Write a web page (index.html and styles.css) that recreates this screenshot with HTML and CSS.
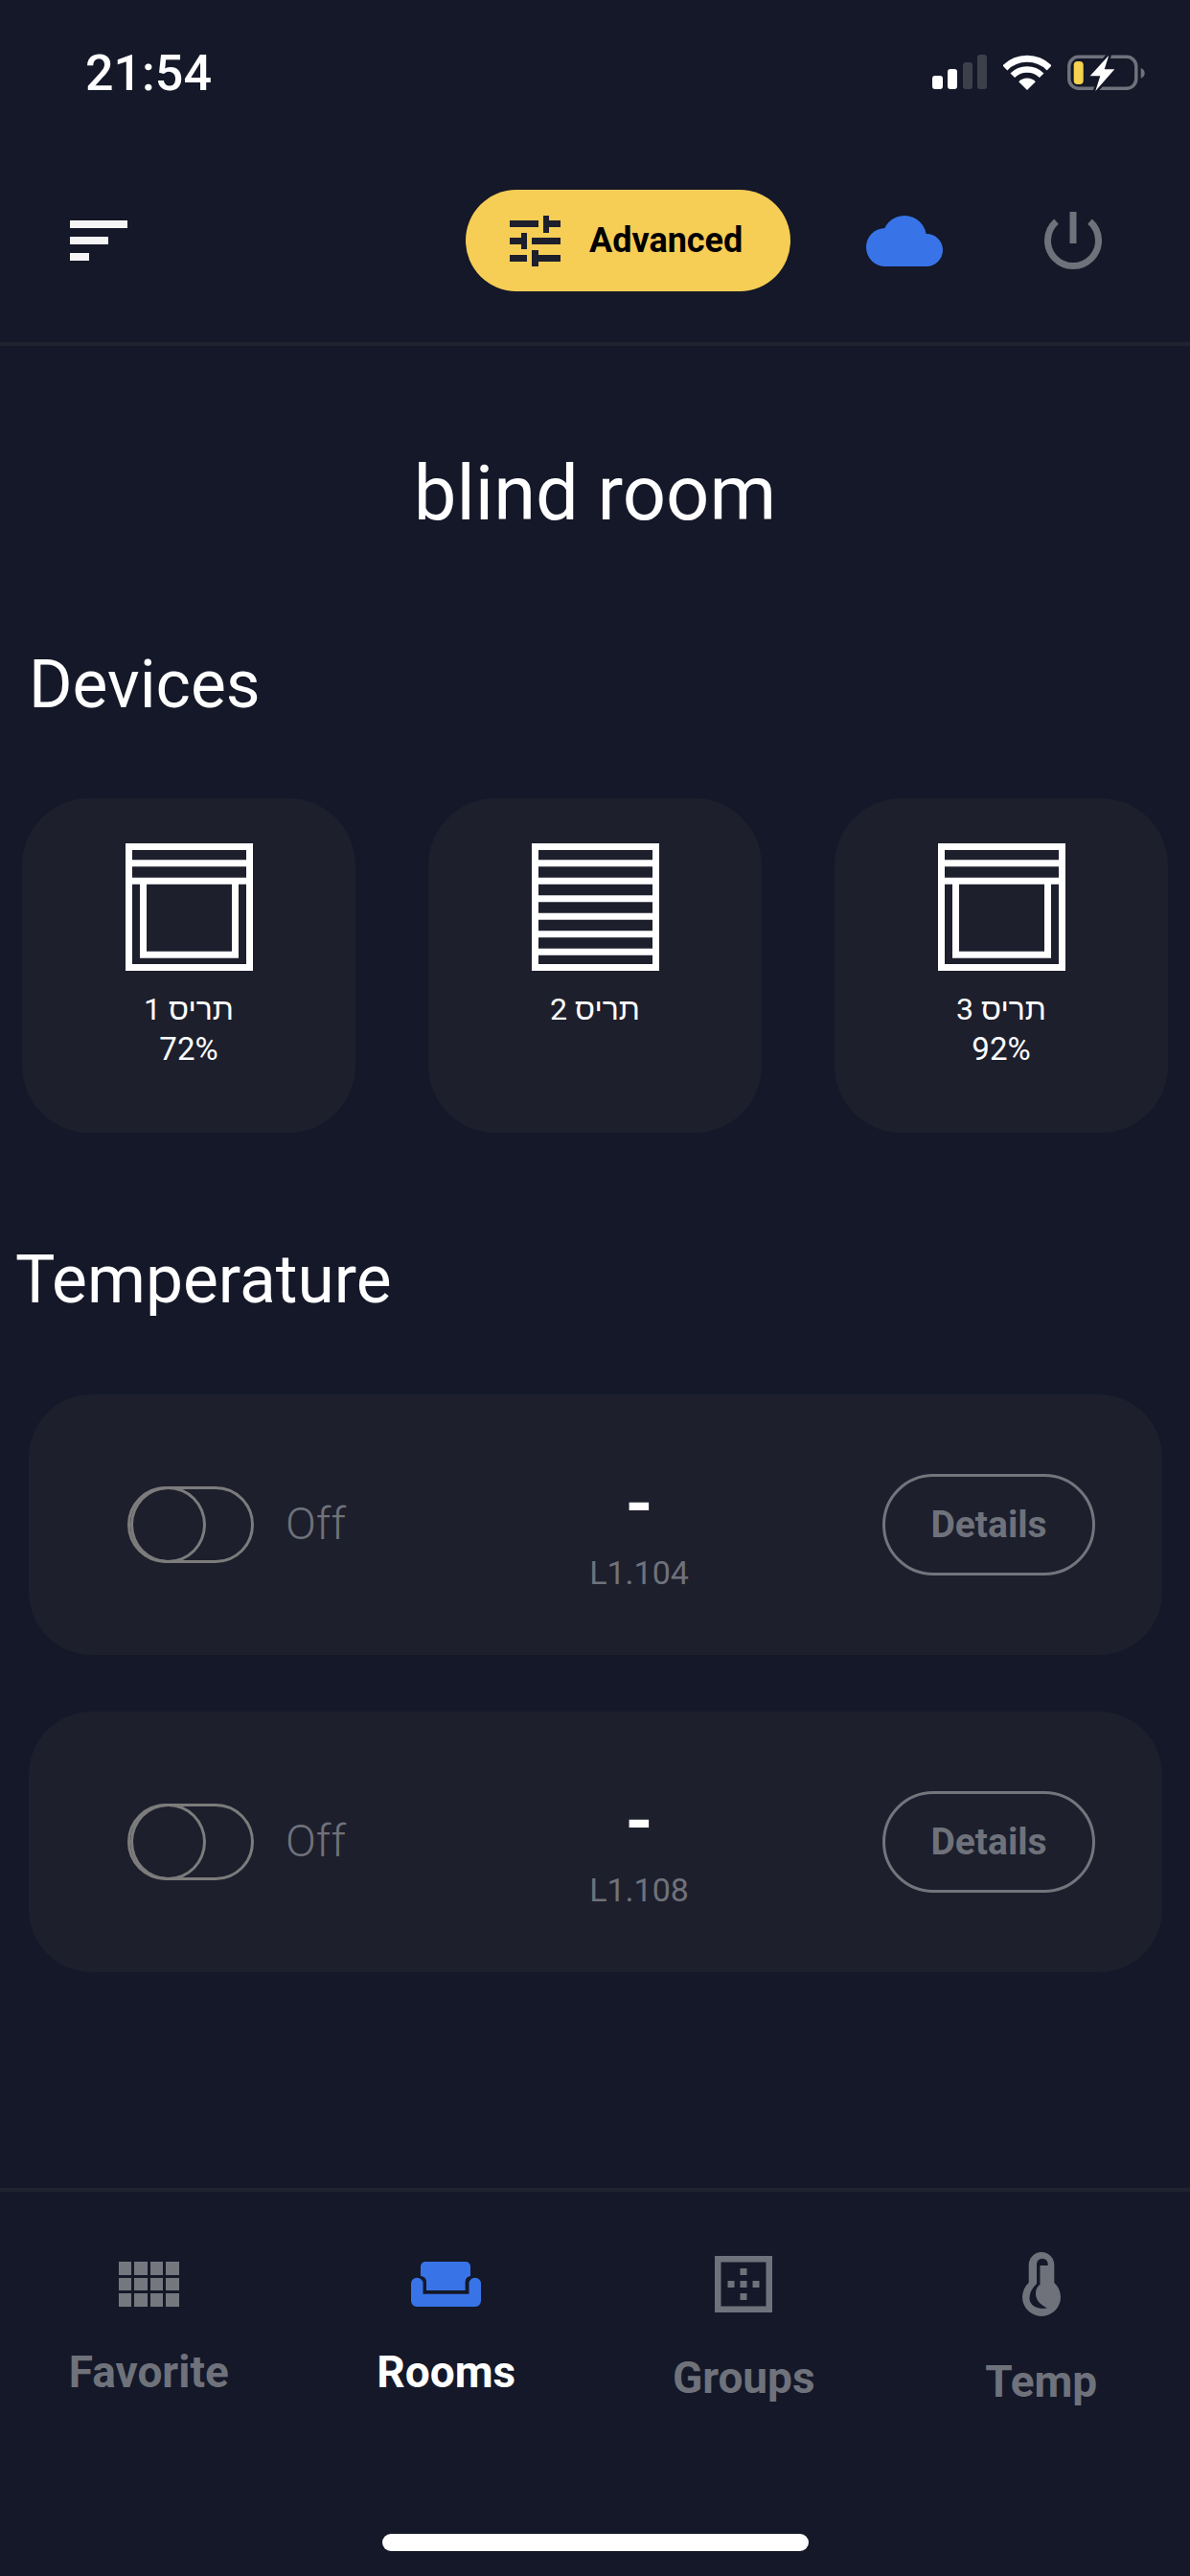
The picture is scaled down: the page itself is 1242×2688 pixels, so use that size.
FILE: index.html
```html
<!DOCTYPE html>
<html lang="en">
<head>
  <meta charset="UTF-8" />
  <meta name="viewport" content="width=device-width, initial-scale=1.0"/>
  <title>blind room</title>
  <link rel="stylesheet" href="styles.css">
</head>
<body>
  <div class="app">
    <div class="status">
      <div class="time">21:54</div>
      <div class="status-icons">
        <svg width="57" height="36" viewBox="0 0 57 36">
          <rect x="0" y="22" width="11" height="14" rx="3" fill="#fff"/>
          <rect x="16" y="15" width="10" height="21" rx="3" fill="#fff"/>
          <rect x="32" y="8" width="10" height="28" rx="3" fill="#3d404b"/>
          <rect x="47" y="0" width="10" height="36" rx="3" fill="#3d404b"/>
        </svg>
        <svg width="50" height="37" viewBox="0 0 50 37">
          <path d="M25 37L16.2 28.2A12.5 12.5 0 0 1 33.8 28.2Z" fill="#fff"/>
          <path d="M9.8 21.8A21.5 21.5 0 0 1 40.2 21.8" fill="none" stroke="#fff" stroke-width="6.5"/>
          <path d="M1.9 13.9A32.7 32.7 0 0 1 48.1 13.9" fill="none" stroke="#fff" stroke-width="7"/>
        </svg>
        <svg width="81" height="39" viewBox="0 0 81 39">
          <rect x="1.8" y="2.3" width="70" height="33" rx="10" fill="none" stroke="#6f727b" stroke-width="3.5"/>
          <path d="M76.7 14C79.5 15 80.7 17 80.7 19.3C80.7 21.7 79.5 23.7 76.7 24.7Z" fill="#6f727b"/>
          <rect x="6.7" y="7" width="10" height="24" rx="4" fill="#f6d34e"/>
          <path d="M43.3 0.7L23.7 22.3H34.3L29.3 38L49.3 15.3H38.7Z" fill="#fff" stroke="#141828" stroke-width="5" paint-order="stroke" stroke-linejoin="round"/>
        </svg>
      </div>
    </div>

    <header class="topbar">
      <div class="menu-icon"><span></span><span></span><span></span></div>
      <button class="advanced">
        <svg width="53" height="53" viewBox="0 0 53 53" fill="#1d1f2d">
          <rect x="0" y="5" width="30" height="7"/>
          <rect x="35" y="0" width="6" height="18"/>
          <rect x="41" y="5" width="12" height="7"/>
          <rect x="0" y="23" width="12" height="7"/>
          <rect x="12" y="18" width="6" height="17"/>
          <rect x="23" y="23" width="30" height="7"/>
          <rect x="0" y="41" width="18" height="7"/>
          <rect x="23" y="36" width="7" height="17"/>
          <rect x="30" y="41" width="23" height="7"/>
        </svg>
        <span>Advanced</span>
      </button>
      <svg class="cloud" width="80" height="53" viewBox="0 0 80 53" fill="#3874e8">
        <circle cx="40" cy="23" r="23"/>
        <circle cx="20" cy="33" r="20"/>
        <circle cx="63" cy="36" r="17"/>
        <rect x="20" y="30" width="43" height="23"/>
      </svg>
      <svg class="power" width="60" height="60" viewBox="0 0 60 60" fill="none" stroke="#6f727b" stroke-width="7">
        <path d="M12.5 10.1A26.5 26.5 0 1 0 47.5 10.1"/>
        <path d="M30 0V33"/>
      </svg>
    </header>

    <h1 class="room-title">blind room</h1>

    <h2 class="section-title devices-title">Devices</h2>
    <div class="devices">
      <div class="device">
        <svg width="133" height="133" viewBox="0 0 133 133" fill="none" stroke="#fff" stroke-width="7">
          <rect x="3.5" y="3.5" width="126" height="126"/>
          <path d="M3.5 20.8H129.5M3.5 39.2H129.5"/>
          <path d="M18.5 39.2V116.2H114.5V39.2"/>
        </svg>
        <div class="device-name" dir="rtl">תריס 1</div>
        <div class="device-value">72%</div>
      </div>
      <div class="device">
        <svg width="133" height="133" viewBox="0 0 133 133" fill="none" stroke="#fff" stroke-width="7">
          <rect x="3.5" y="3.5" width="126" height="126"/>
          <path d="M3.5 20.8H129.5M3.5 39.2H129.5M3.5 57.8H129.5M3.5 76.2H129.5M3.5 94.8H129.5M3.5 113.2H129.5"/>
        </svg>
        <div class="device-name" dir="rtl">תריס 2</div>
      </div>
      <div class="device">
        <svg width="133" height="133" viewBox="0 0 133 133" fill="none" stroke="#fff" stroke-width="7">
          <rect x="3.5" y="3.5" width="126" height="126"/>
          <path d="M3.5 20.8H129.5M3.5 39.2H129.5"/>
          <path d="M18.5 39.2V116.2H114.5V39.2"/>
        </svg>
        <div class="device-name" dir="rtl">תריס 3</div>
        <div class="device-value">92%</div>
      </div>
    </div>

    <h2 class="section-title temp-title">Temperature</h2>
    <div class="temps">
      <div class="temp-card">
        <div class="temp-switch">
          <div class="toggle"><div class="knob"></div></div>
          <span class="toggle-label">Off</span>
        </div>
        <div class="temp-info">
          <div class="temp-value">-</div>
          <div class="temp-name">L1.104</div>
        </div>
        <button class="details">Details</button>
      </div>
      <div class="temp-card">
        <div class="temp-switch">
          <div class="toggle"><div class="knob"></div></div>
          <span class="toggle-label">Off</span>
        </div>
        <div class="temp-info">
          <div class="temp-value">-</div>
          <div class="temp-name">L1.108</div>
        </div>
        <button class="details">Details</button>
      </div>
    </div>

    <nav class="tabbar">
      <div class="tab">
        <div class="grid-icon">
          <i></i><i></i><i></i><i></i>
          <i></i><i></i><i></i><i></i>
          <i></i><i></i><i></i><i></i>
        </div>
        <span>Favorite</span>
      </div>
      <div class="tab active">
        <svg width="73" height="47" viewBox="0 0 73 47" fill="#3874e8">
          <path d="M15 0H57A5 5 0 0 1 62 5V15C58.500 15.500 56.600 18 56.600 21V30H16V21C16 18 14 15.500 10 15V5A5 5 0 0 1 15 0Z"/>
          <path d="M6.200 16.700A6.200 6.200 0 0 1 12.500 23V33.700H60.500V23A6.200 6.200 0 0 1 73 23V41A6 6 0 0 1 67 47H6A6 6 0 0 1 0 41V23A6.200 6.200 0 0 1 6.200 16.700Z"/>
        </svg>
        <span>Rooms</span>
      </div>
      <div class="tab">
        <svg width="60" height="59" viewBox="0 0 60 59" fill="#6f727b">
          <path fill-rule="evenodd" d="M0 0H60V59H0ZM6.500 6.500V52.500H53.500V6.500Z"/>
          <rect x="26.500" y="13" width="7" height="7"/>
          <rect x="13.500" y="26" width="7" height="7"/>
          <rect x="26.500" y="26" width="7" height="7"/>
          <rect x="39.500" y="26" width="7" height="7"/>
          <rect x="26.500" y="39" width="7" height="7"/>
        </svg>
        <span>Groups</span>
      </div>
      <div class="tab">
        <svg width="40" height="67" viewBox="0 0 40 67">
          <path d="M6.700 13.300a13.300 13.300 0 0 1 26.600 0V32a20 20 0 1 1-26.600 0Z" fill="#6f727b"/>
          <path d="M15 12.500a5.850 5.850 0 0 1 11.700 0V14H18.500V34C12 38 11 52 26 58.300C14 61 6 54 7.700 46C8.500 40 12 36 15 33Z" fill="#141828"/>
        </svg>
        <span>Temp</span>
      </div>
    </nav>
    <div class="home-bar"></div>
  </div>
</body>
</html>
```

FILE: styles.css
```css
:root {
  --bg: #141828;
  --surface: #1d1f2d;
  --line: #20222f;
  --muted: #6f727b;
  --blue: #3874e8;
  --yellow: #f6cd55;
}

* {
  margin: 0;
  padding: 0;
  box-sizing: border-box;
}

body {
  background: var(--bg);
  color: #fff;
  font-family: Roboto, "Noto Sans", sans-serif;
}

.app {
  display: flex;
  flex-direction: column;
  width: 1242px;
  height: 2688px;
  overflow: hidden;
}

/* status bar */
.status {
  display: flex;
  justify-content: space-between;
  height: 145px;
  padding: 57px 47px 0 89px;
}

.time {
  font-size: 52px;
  font-weight: 500;
  line-height: 40px;
}

.status-icons {
  display: flex;
  align-items: flex-start;
  gap: 17px;
}

/* top bar */
.topbar {
  display: flex;
  align-items: center;
  height: 216px;
  padding-left: 73px;
  border-bottom: 4px solid var(--line);
}

.menu-icon {
  display: flex;
  flex-direction: column;
  gap: 9px;
  width: 60px;
}

.menu-icon span {
  display: block;
  height: 8px;
  background: #f5f5f5;
}

.menu-icon span:nth-child(2) { width: 40px; }
.menu-icon span:nth-child(3) { width: 20px; }

.advanced {
  display: flex;
  align-items: center;
  gap: 30px;
  width: 339px;
  height: 106px;
  margin-left: 353px;
  padding-left: 46px;
  background: var(--yellow);
  border: none;
  border-radius: 53px;
  color: #000;
  font-family: inherit;
  font-size: 36px;
  font-weight: 700;
}

.cloud { margin-left: 79px; }
.power { margin-left: 106px; }

/* headings */
.room-title {
  margin-top: 107px;
  font-size: 79.500px;
  font-weight: 400;
  line-height: 94px;
  text-align: center;
}

.section-title {
  font-size: 69.500px;
  font-weight: 400;
  line-height: 80px;
}

.devices-title {
  margin-top: 113px;
  padding-left: 30px;
}

.temp-title {
  margin-top: 114px;
  padding-left: 16px;
}

/* device cards */
.devices {
  display: flex;
  justify-content: space-between;
  margin-top: 78px;
  padding: 0 23px;
}

.device {
  width: 348px;
  height: 349px;
  padding-top: 47px;
  background: var(--surface);
  border-radius: 70px;
  text-align: center;
  font-size: 33px;
  line-height: 41px;
}

.device svg {
  display: block;
  margin: 0 auto 20px;
}

.device-name {
  font-size: 32px;
}

/* temperature cards */
.temps {
  display: flex;
  flex-direction: column;
  gap: 59px;
  margin: 79px 29px 0 30px;
}

.temp-card {
  display: grid;
  grid-template-columns: 400px 268px 1fr;
  align-items: center;
  height: 272px;
  padding: 0 70px 0 103px;
  background: var(--surface);
  border-radius: 66px;
}

.temp-switch {
  display: flex;
  align-items: center;
  gap: 33px;
}

.toggle {
  width: 132px;
  height: 80px;
  border: 3px solid #7c7c7c;
  border-radius: 40px;
}

.knob {
  width: 79px;
  height: 80px;
  margin-top: -3px;
  border: 3px solid #7c7c7c;
  border-radius: 50%;
}

.toggle-label {
  padding-bottom: 3px;
  color: var(--muted);
  font-size: 47px;
  font-weight: 300;
}

.temp-info {
  padding-top: 14px;
  text-align: center;
}

.temp-value {
  font-size: 74px;
  font-weight: 700;
  line-height: 70px;
}

.temp-name {
  margin-top: 16px;
  color: var(--muted);
  font-size: 34px;
  line-height: 40px;
}

.details {
  justify-self: end;
  width: 222px;
  height: 106px;
  background: none;
  border: 3px solid #73757d;
  border-radius: 53px;
  color: var(--muted);
  font-family: inherit;
  font-size: 39px;
  font-weight: 700;
}

/* bottom tabs */
.tabbar {
  display: grid;
  grid-template-columns: repeat(4, 1fr);
  align-items: center;
  height: 285px;
  margin-top: auto;
  padding-top: 6px;
  border-top: 4px solid var(--line);
}

.tab {
  display: flex;
  flex-direction: column;
  align-items: center;
  gap: 42px;
  color: var(--muted);
  font-size: 46px;
  font-weight: 700;
  line-height: 52px;
}

.tab.active {
  color: #fff;
}

.grid-icon {
  display: grid;
  grid-template-columns: repeat(4, 13.500px);
  grid-auto-rows: 13.300px;
  gap: 3.300px 3px;
}

.grid-icon i {
  background: #75777f;
}

.home-bar {
  flex: none;
  width: 445px;
  height: 18px;
  margin: 76px auto 26px;
  background: #fff;
  border-radius: 9px;
}
```
